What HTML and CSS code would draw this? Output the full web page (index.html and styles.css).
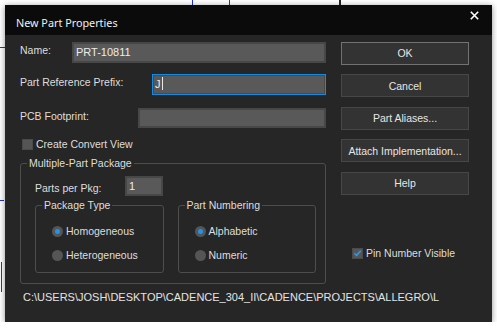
FILE: index.html
```html
<!DOCTYPE html>
<html lang="en">

<head>
    <meta charset="UTF-8">
    <title>New Part Properties</title>
    <link rel="stylesheet" href="styles.css">
</head>

<body>

    <!-- schematic canvas peeking out behind the dialog -->
    <div class="canvas">
        <span class="wire wire-h" style="left: 0; top: 47px; width: 6px;"></span>
        <span class="wire wire-v" style="left: 192px; top: 0; height: 6px;"></span>
        <span class="wire wire-v" style="left: 229px; top: 0; height: 6px;"></span>
        <span class="wire wire-v dark" style="left: 339px; top: 0; height: 6px;"></span>
        <span class="wire wire-h" style="left: 0; top: 200px; width: 4px;"></span>
        <span class="wire wire-v" style="left: 1px; top: 262px; height: 30px;"></span>
    </div>

    <div class="dialog">
        <div class="titlebar">
            <span class="title">New Part Properties</span>
            <svg class="close" width="9" height="9" viewBox="0 0 9 9">
                <path d="M0.8 0.8 L8.2 8.2 M8.2 0.8 L0.8 8.2" stroke="#ffffff" stroke-width="1.6" fill="none" />
            </svg>
        </div>

        <div class="content">
            <div class="main">
                <div class="left">
                    <div class="row row-name">
                        <label>Name:</label>
                        <div class="field field-name">PRT-10811</div>
                    </div>
                    <div class="row row-prefix">
                        <label>Part Reference Prefix:</label>
                        <div class="field field-prefix focused">J<span class="caret"></span></div>
                    </div>
                    <div class="row row-pcb">
                        <label>PCB Footprint:</label>
                        <div class="field field-pcb"></div>
                    </div>
                    <div class="check row-convert">
                        <span class="box"></span>
                        <span>Create Convert View</span>
                    </div>

                    <fieldset class="group group-package">
                        <legend>Multiple-Part Package</legend>
                        <div class="group-inner">
                            <div class="row row-parts">
                                <label>Parts per Pkg:</label>
                                <div class="field field-parts">1</div>
                            </div>
                            <div class="subgroups">
                                <fieldset class="group group-type">
                                    <legend>Package Type</legend>
                                    <div class="radios">
                                        <div class="radio"><span class="dot on"></span><span>Homogeneous</span></div>
                                        <div class="radio"><span class="dot"></span><span>Heterogeneous</span></div>
                                    </div>
                                </fieldset>
                                <fieldset class="group group-numbering">
                                    <legend>Part Numbering</legend>
                                    <div class="radios">
                                        <div class="radio"><span class="dot on"></span><span>Alphabetic</span></div>
                                        <div class="radio"><span class="dot"></span><span>Numeric</span></div>
                                    </div>
                                </fieldset>
                            </div>
                        </div>
                    </fieldset>
                </div>

                <div class="buttons">
                    <button class="default">OK</button>
                    <button>Cancel</button>
                    <button>Part Aliases...</button>
                    <button>Attach Implementation...</button>
                    <button>Help</button>
                    <div class="check row-pin">
                        <span class="box checked">
                            <svg width="10" height="10" viewBox="0 0 10 10">
                                <path d="M1.5 5.2 L4 7.6 L8.6 2.4" stroke="#2a9bf0" stroke-width="1.6" fill="none" />
                            </svg>
                        </span>
                        <span>Pin Number Visible</span>
                    </div>
                </div>
            </div>

            <div class="path">C:\USERS\JOSH\DESKTOP\CADENCE_304_II\CADENCE\PROJECTS\ALLEGRO\L</div>
        </div>
    </div>

</body>

</html>
```

FILE: styles.css
```css
body {
    margin: 0;
    background-color: #ffffff;
    font-family: "Liberation Sans", Arial, sans-serif;
    font-size: 10.5px;
    color: #dedede;
    overflow: hidden;
}

.canvas {
    position: absolute;
    top: 0;
    left: 0;
    width: 497px;
    height: 328px;
}

.wire {
    position: absolute;
    background-color: #2033d8;
}

.wire-h {
    height: 1px;
}

.wire-v {
    width: 1px;
}

.wire.dark {
    width: 2px;
    background-color: #222222;
}

.dialog {
    position: relative;
    margin: 5px 0 0 5px;
    width: 487px;
    height: 317px;
    background-color: #262626;
    box-shadow: 0 1px 6px rgba(0, 0, 0, 0.45);
    display: flex;
    flex-direction: column;
}

.titlebar {
    height: 30px;
    background-color: #0b0b0b;
    display: flex;
    justify-content: space-between;
    align-items: flex-start;
    padding: 0 13px 0 11px;
}

.title {
    font-family: "Noto Sans", sans-serif;
    font-size: 10.8px;
    line-height: 16px;
    margin-top: 10px;
    color: #f0f0f0;
}

.close {
    margin-top: 6px;
}

.content {
    padding: 7px 0 0 15px;
    display: flex;
    flex-direction: column;
}

.main {
    display: flex;
}

.left {
    width: 306px;
    display: flex;
    flex-direction: column;
}

.row {
    display: flex;
    align-items: center;
}

.row label {
    padding-bottom: 5px;
}

.field {
    box-sizing: border-box;
    height: 21px;
    background-color: #595959;
    border: 2px solid #474747;
    padding: 1px 2px;
    line-height: 14px;
    font-size: 11px;
    color: #ececec;
}

.field.focused {
    border: 1px solid #1689e0;
    box-shadow: inset 0 0 0 1px #4a4a4a;
    padding: 2px 2px;
}

.caret {
    display: inline-block;
    width: 1px;
    height: 13px;
    margin-left: 1px;
    vertical-align: -2px;
    background-color: #e8e8e8;
}

.row-name .field {
    margin-left: auto;
    width: 254px;
}

.row-prefix {
    margin-top: 11px;
}

.row-prefix .field {
    margin-left: auto;
    width: 174px;
}

.row-pcb {
    margin-top: 13px;
}

.row-pcb .field {
    margin-left: auto;
    width: 188px;
    height: 20px;
}

.check {
    display: flex;
    align-items: center;
    height: 14px;
}

.box {
    box-sizing: border-box;
    width: 11px;
    height: 11px;
    background-color: #555555;
    border: 1px solid #4a4a4a;
    margin-right: 3px;
    display: flex;
    align-items: center;
    justify-content: center;
}

.row-convert {
    margin-top: 9px;
    padding-left: 2px;
}

.group {
    margin: 0;
    padding: 0;
    border: 1px solid #4d4d4d;
    border-radius: 3px;
    min-width: 0;
}

.group legend {
    margin-left: 6px;
    padding: 0 2px;
    line-height: 14px;
}

.group-package {
    margin-top: 5px;
}

.group-inner {
    padding: 6px 9px 10px 14px;
}

.row-parts label {
    width: 90px;
    padding-bottom: 0;
    padding-top: 3px;
}

.row-parts .field {
    width: 38px;
    height: 20px;
}

.subgroups {
    margin-top: 2px;
    display: flex;
    gap: 14px;
}

.group-type {
    width: 129px;
    box-sizing: border-box;
}

.group-numbering {
    width: 139px;
    box-sizing: border-box;
}

.radios {
    padding: 11px 0 9px 16px;
    display: flex;
    flex-direction: column;
    gap: 8px;
}

.radio {
    display: flex;
    align-items: center;
    height: 16px;
}

.dot {
    box-sizing: border-box;
    width: 11px;
    height: 11px;
    border-radius: 50%;
    background-color: #555555;
    margin-right: 3px;
    display: flex;
    align-items: center;
    justify-content: center;
}

.dot.on::after {
    content: "";
    width: 5px;
    height: 5px;
    border-radius: 50%;
    background-color: #1e94f0;
}

.buttons {
    margin-left: 15px;
    width: 128px;
    display: flex;
    flex-direction: column;
    gap: 9.5px;
}

button {
    height: 23px;
    background-color: #333333;
    border: 1px solid #474747;
    color: #e6e6e6;
    font-family: "Liberation Sans", Arial, sans-serif;
    font-size: 10.5px;
    padding: 0;
}

button.default {
    border-color: #727272;
    height: 22.5px;
}

.row-pin {
    margin-top: 42px;
    padding-left: 11px;
}

.path {
    margin-top: 6px;
    padding-left: 3px;
    line-height: 14px;
    font-size: 11px;
    white-space: nowrap;
    color: #e4e4e4;
}
```
